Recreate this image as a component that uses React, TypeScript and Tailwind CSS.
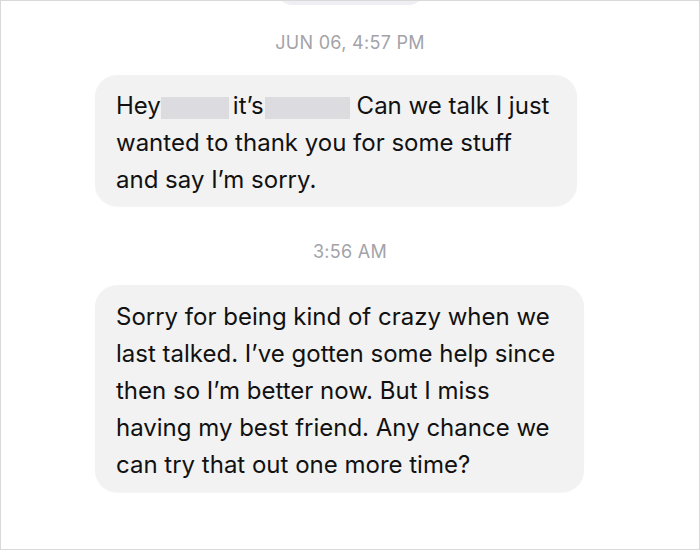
import React from 'react';

const font = { fontFamily: 'Inter, "Liberation Sans", sans-serif' };

function Stamp({ children }: { children: React.ReactNode }) {
  return (
    <div className="text-center text-[18px] leading-[20px] text-[#a3a3a8] tracking-[0.3px]">
      {children}
    </div>
  );
}

function Redacted({ w }: { w: string }) {
  return <span className={`inline-block align-[-5px] h-[22px] bg-[#dcdce0] ${w}`} />;
}

export default function App() {
  return (
    <div
      className="w-[700px] h-[550px] bg-white border border-[#d9d9d9] overflow-hidden flex flex-col"
      style={font}
    >
      {/* bottom of the previous bubble, cut off */}
      <div className="mx-auto mt-[-26px] w-[147px] h-[30px] rounded-[16px] bg-[#efeff3] shrink-0" />

      <div className="mt-[28px]">
        <Stamp>JUN 06, 4:57 PM</Stamp>
      </div>

      <div className="ml-[94px] mt-[22px] w-[482px] rounded-[22px] bg-[#f2f2f2] px-[21px] pt-[12px] pb-[8px] text-[24px] leading-[37px] text-[#111] shadow-[0_1px_1px_rgba(0,0,0,0.04)]">
        <div className="whitespace-nowrap">
          Hey<Redacted w="w-[68px]" />
          <span className="ml-[4px]">it’s</span>
          <Redacted w="w-[85px] ml-[1px] mr-[7px]" />Can we talk I just
        </div>
        <div>wanted to thank you for some stuff</div>
        <div>and say I’m sorry.</div>
      </div>

      <div className="mt-[36px]">
        <Stamp>3:56 AM</Stamp>
      </div>

      <div className="ml-[94px] mt-[23px] w-[489px] rounded-[22px] bg-[#f2f2f2] px-[21px] pt-[13px] pb-[9px] text-[24px] leading-[37px] text-[#111] shadow-[0_1px_1px_rgba(0,0,0,0.04)]">
        <div>Sorry for being kind of crazy when we</div>
        <div>last talked. I’ve gotten some help since</div>
        <div>then so I’m better now. But I miss</div>
        <div>having my best friend. Any chance we</div>
        <div>can try that out one more time?</div>
      </div>
    </div>
  );
}
